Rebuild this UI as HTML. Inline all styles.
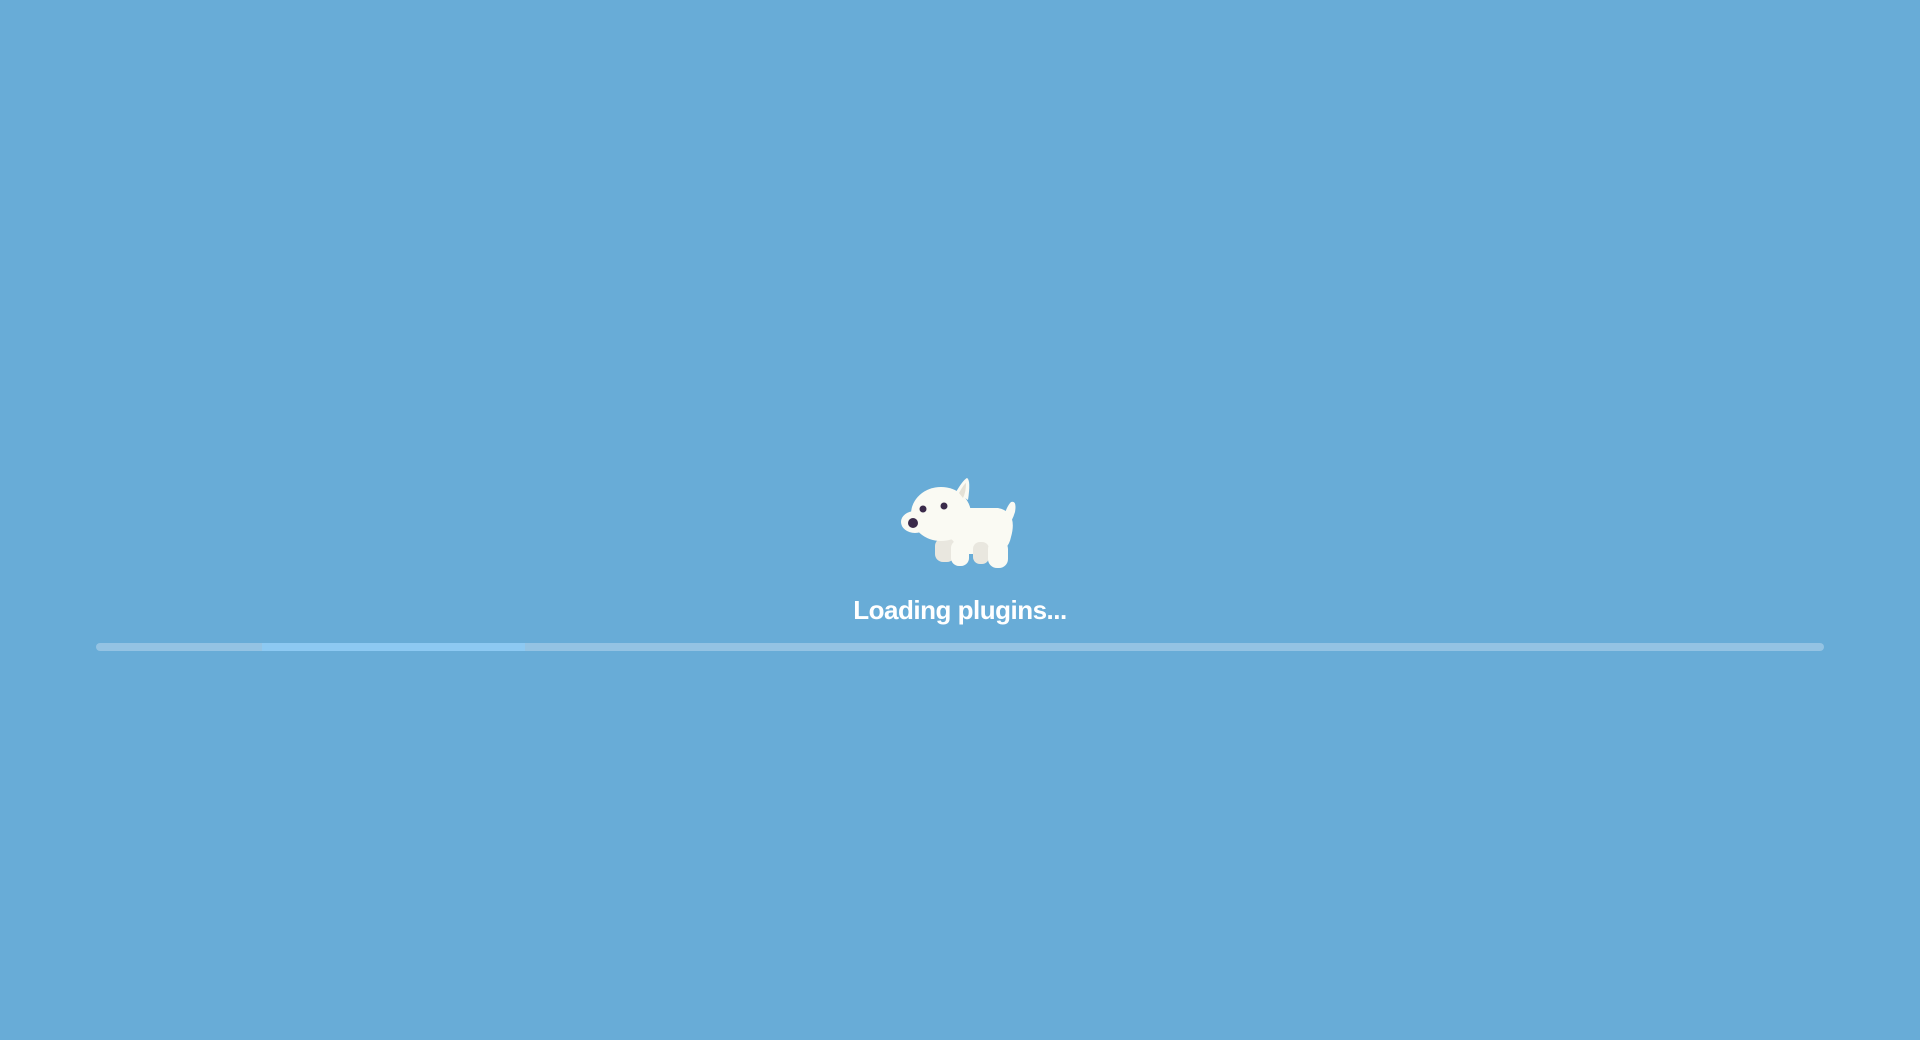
<!DOCTYPE html>
<html><head><style>
html,body{margin:0;padding:0;width:1920px;height:1040px;background:#68acd7;overflow:hidden}
.t{position:absolute;left:0;width:1920px;top:595px;text-align:center;color:#fff;font:bold 26px "Liberation Sans",sans-serif;letter-spacing:-0.5px}
.bar{position:absolute;left:96px;top:643px;width:1728px;height:8px;border-radius:4px;background:#94c3e3}
.hl{position:absolute;left:166px;top:0;width:263px;height:8px;background:#8dc9f2}
svg{position:absolute;left:893px;top:472px}
</style></head><body>
<svg width="130" height="110" viewBox="0 0 130 110">
 <g fill="#fafaf3">
  <path d="M65 52 Q60 38 75 36 L105 36 Q125 40 118 65 Q115 80 100 82 L60 82 Q52 70 65 52Z"/>
  <path d="M110 48 Q113 35 118 30 Q124 28 122 40 Q119 50 114 55Z"/>
  <rect x="42" y="66" width="20" height="24" rx="8" fill="#e9e7df"/>
  <rect x="58" y="68" width="18" height="26" rx="8"/>
  <rect x="80" y="70" width="16" height="22" rx="7" fill="#e9e7df"/>
  <rect x="95" y="68" width="20" height="28" rx="9"/>
  <path d="M63 20 Q70 8 74 6 Q78 8 75 28Z"/>
  <ellipse cx="48" cy="42" rx="30" ry="27"/>
  <ellipse cx="22" cy="50" rx="14" ry="11"/>
 </g>
 <path d="M66 21 Q71 12 73 11 Q73 20 70 26Z" fill="#e4e1d6"/>
 <circle cx="20" cy="51" r="5" fill="#3a2a4a"/>
 <circle cx="30" cy="37" r="3.5" fill="#3a2a4a"/>
 <circle cx="51" cy="34" r="3.5" fill="#3a2a4a"/>
</svg>
<div class="t">Loading plugins...</div>
<div class="bar"><div class="hl"></div></div>
</body></html>
